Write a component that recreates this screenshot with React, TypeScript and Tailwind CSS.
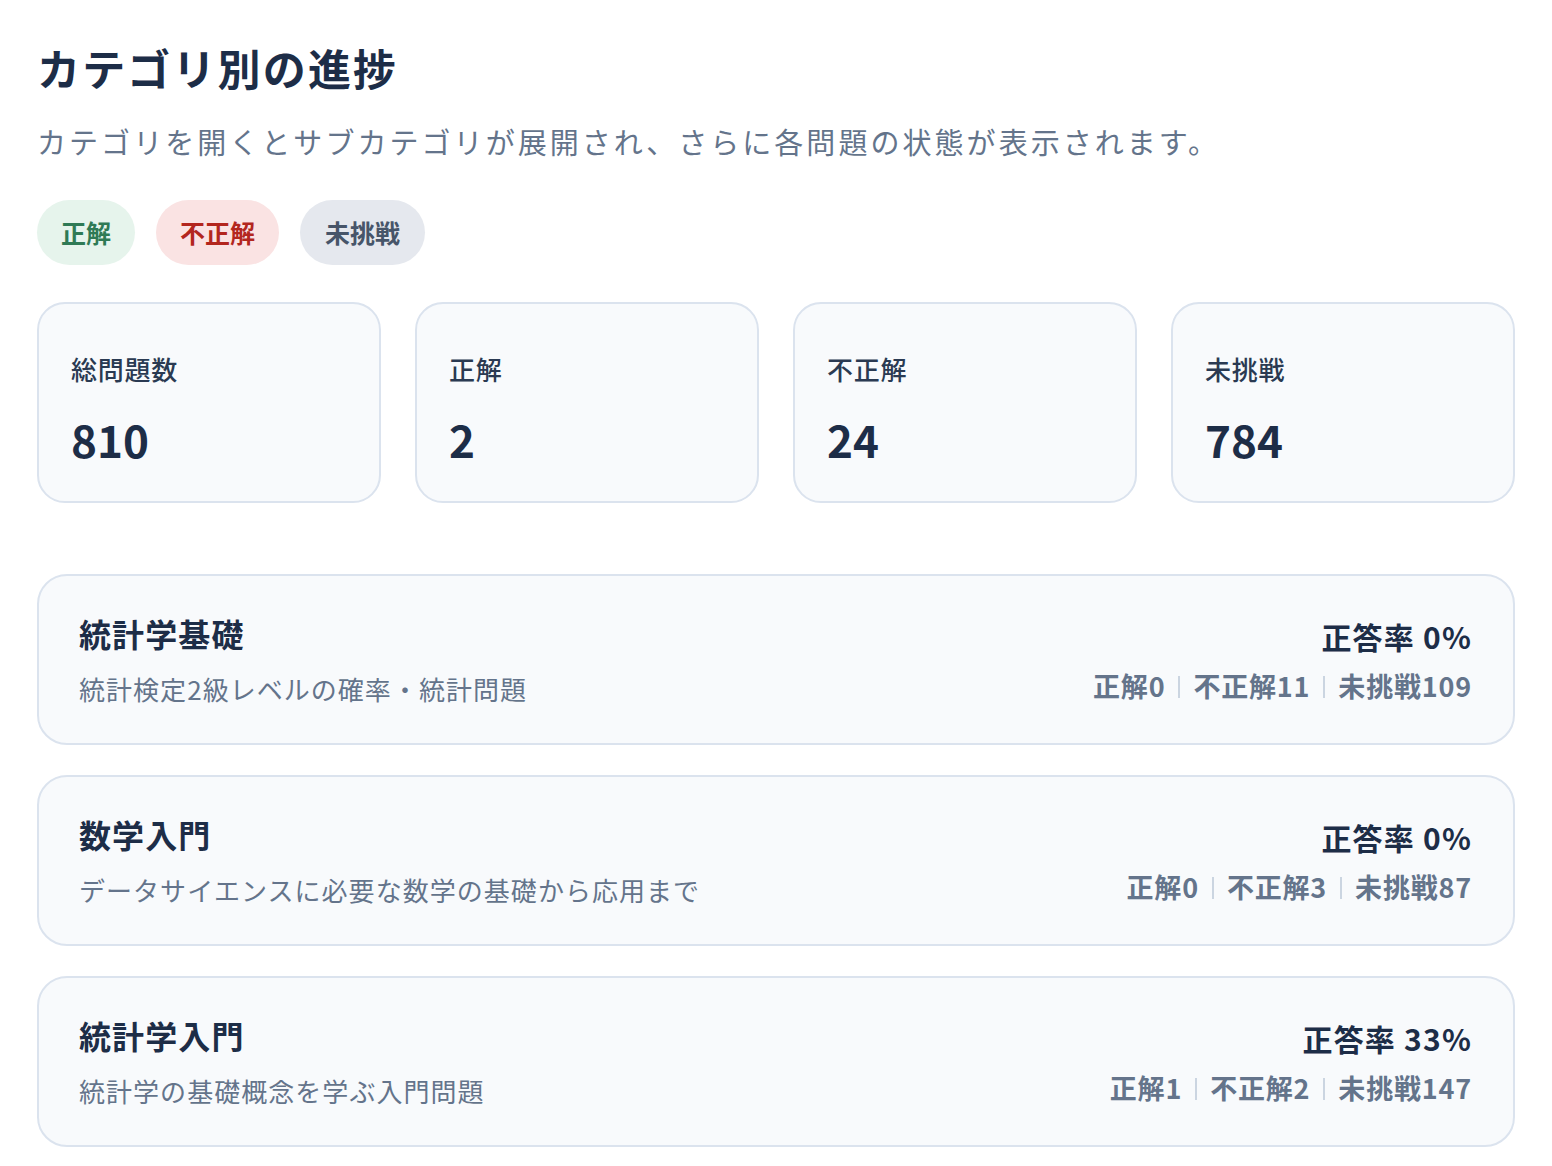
import React from 'react'

const font = { fontFamily: '"Noto Sans CJK JP", "Noto Sans", sans-serif' }

const stats = [
  { label: '総問題数', value: 810 },
  { label: '正解', value: 2 },
  { label: '不正解', value: 24 },
  { label: '未挑戦', value: 784 },
]

const categories = [
  { name: '統計学基礎', desc: '統計検定2級レベルの確率・統計問題', rate: 0, ok: 0, ng: 11, todo: 109 },
  { name: '数学入門', desc: 'データサイエンスに必要な数学の基礎から応用まで', rate: 0, ok: 0, ng: 3, todo: 87 },
  { name: '統計学入門', desc: '統計学の基礎概念を学ぶ入門問題', rate: 33, ok: 1, ng: 2, todo: 147 },
]

function Sep() {
  return <span className="mx-[13px] inline-block h-[22px] w-[2px] translate-y-[2px] bg-[#cbd5e1]" />
}

export default function App() {
  return (
    <div className="min-h-screen bg-white px-[37px] pt-[40px] pb-[18px]" style={font}>
      <h1 className="text-[43px] leading-[55px] font-bold tracking-[0.05em] text-[#1d2d47]">カテゴリ別の進捗</h1>
      <p className="mt-6 text-[29px] leading-[45px] tracking-[0.105em] text-[#64748b]">
        カテゴリを開くとサブカテゴリが展開され、さらに各問題の状態が表示されます。
      </p>

      <div className="mt-[36px] flex gap-[21px]">
        <span className="flex h-[65px] items-center rounded-full bg-[#e6f4ec] px-6 text-[25px] font-bold text-[#2f7a55]">正解</span>
        <span className="flex h-[65px] items-center rounded-full bg-[#fae3e3] px-6 text-[25px] font-bold text-[#b3261e]">不正解</span>
        <span className="flex h-[65px] items-center rounded-full bg-[#e5e8ee] px-[25px] text-[25px] font-bold text-[#475569]">未挑戦</span>
      </div>

      <div className="mt-[37px] grid grid-cols-4 gap-[34px]">
        {stats.map(s => (
          <div key={s.label} className="h-[201px] rounded-[28px] border-2 border-[#dbe3ee] bg-[#f8fafc] px-[32px] pt-[47px]">
            <div className="text-[26px] leading-[36px] font-medium tracking-[0.03em] text-[#2a3a52]">{s.label}</div>
            <div className="mt-[26px] text-[44px] leading-[53px] font-bold text-[#1d2d47]">{s.value}</div>
          </div>
        ))}
      </div>

      <div className="mt-[71px] flex flex-col gap-[30px]">
        {categories.map(c => (
          <div key={c.name} className="flex h-[171px] items-center justify-between rounded-[30px] border-2 border-[#dbe3ee] bg-[#f8fafc] pl-[40px] pr-[41px]">
            <div>
              <div className="text-[32px] leading-[45px] font-bold tracking-[0.035em] text-[#1d2d47]">{c.name}</div>
              <div className="mt-[13px] text-[26px] leading-[39px] tracking-[0.04em] text-[#64748b]">{c.desc}</div>
            </div>
            <div className="flex flex-col items-end">
              <div className="text-[30px] leading-[42px] font-bold tracking-[0.04em] text-[#1d2d47]">正答率 {c.rate}%</div>
              <div className="mt-[9px] flex items-center text-[27px] leading-[39px] font-semibold tracking-[0.03em] text-[#64748b]">
                <span>正解{c.ok}</span>
                <Sep />
                <span>不正解{c.ng}</span>
                <Sep />
                <span>未挑戦{c.todo}</span>
              </div>
            </div>
          </div>
        ))}
      </div>
    </div>
  )
}
